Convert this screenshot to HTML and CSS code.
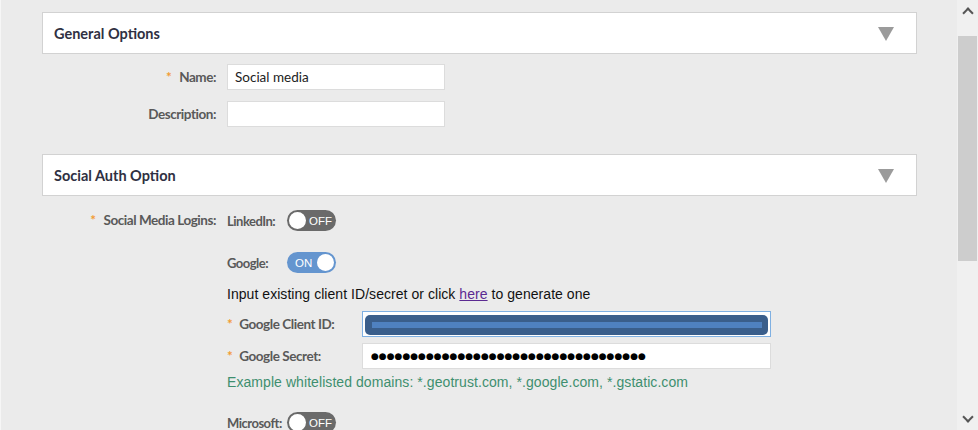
FILE: index.html
```html
<!DOCTYPE html>
<html lang="en">
<head>
    <meta charset="utf-8">
    <title>Social media</title>
    <link rel="stylesheet" href="styles.css">
</head>

<body>
    <div class="page">
        <main class="content">
            <section class="panel">
                <h2>General Options</h2>
                <span class="caret"></span>
            </section>

            <div class="row row_name">
                <label class="lbl req" for="name">Name:</label>
                <input class="field" type="text" id="name" value="Social media">
            </div>
            <div class="row row_desc">
                <label class="lbl" for="desc">Description:</label>
                <input class="field" type="text" id="desc">
            </div>

            <section class="panel panel_auth">
                <h2>Social Auth Option</h2>
                <span class="caret"></span>
            </section>

            <div class="row row_logins">
                <div class="lbl req">Social Media Logins:</div>
                <div class="providers">
                    <div class="provider">
                        <span class="pname">LinkedIn:</span>
                        <span class="toggle off"><span class="knob"></span><span class="state">OFF</span></span>
                    </div>
                    <div class="provider google">
                        <span class="pname">Google:</span>
                        <span class="toggle on"><span class="state">ON</span><span class="knob"></span></span>
                    </div>

                    <p class="hint">Input existing client ID/secret or click <a href="#">here</a> to generate one</p>

                    <div class="sub_row client_row">
                        <label class="sub_lbl req">Google Client ID:</label>
                        <div class="field wide focused"><span class="mask"><span class="mask_line"></span></span></div>
                    </div>
                    <div class="sub_row secret_row">
                        <label class="sub_lbl req" for="secret">Google Secret:</label>
                        <input class="field wide dots" type="text" id="secret" value="●●●●●●●●●●●●●●●●●●●●●●●●●●●●●●●●●●●">
                    </div>

                    <p class="domains">Example whitelisted domains: *.geotrust.com, *.google.com, *.gstatic.com</p>

                    <div class="provider microsoft">
                        <span class="pname">Microsoft:</span>
                        <span class="toggle off"><span class="knob"></span><span class="state">OFF</span></span>
                    </div>
                </div>
            </div>
        </main>

        <div class="scrollbar">
            <span class="arrow up"></span>
            <span class="thumb"></span>
            <span class="arrow down"></span>
        </div>
    </div>
</body>

</html>
```

FILE: styles.css
```css
html, body {
    margin: 0;
    height: 100%;
    overflow: hidden;
}

body {
    font-family: Lato, "Noto Sans", sans-serif;
    background-color: #ebebeb;
}

.page {
    display: flex;
    height: 430px;
    border-left: 1px solid #f6f6f6;
}

.content {
    flex: 1;
    padding-top: 12px;
}

/* collapsible section header */
.panel {
    display: flex;
    align-items: center;
    justify-content: space-between;
    box-sizing: border-box;
    width: 875px;
    height: 42px;
    margin-left: 41px;
    padding: 1px 22px 0 11px;
    background-color: #fff;
    border: 1px solid #d2d2d2;
}

.panel h2 {
    margin: 0;
    font-size: 14.5px;
    font-weight: bold;
    color: #2f3042;
}

.caret {
    width: 0;
    height: 0;
    border-left: 8px solid transparent;
    border-right: 8px solid transparent;
    border-top: 14px solid #9b9b9b;
}

.panel_auth {
    margin-top: 27px;
}

/* form rows */
.row {
    display: flex;
    align-items: center;
    padding-left: 41px;
}

.row_name {
    margin-top: 10px;
}

.row_desc {
    margin-top: 11px;
}

.row_logins {
    align-items: flex-start;
    margin-top: 14px;
}

.lbl, .pname, .sub_lbl {
    font-size: 13.5px;
    font-weight: bold;
    letter-spacing: -0.45px;
    color: #595959;
    flex-shrink: 0;
}

.lbl {
    width: 174px;
    margin-right: 11px;
    text-align: right;
    line-height: 21px;
}

.req::before {
    content: "*";
    color: #f29b32;
    margin-right: 8px;
}

.field {
    box-sizing: border-box;
    flex-shrink: 0;
    width: 218px;
    height: 26px;
    margin: 0;
    padding: 0 7px;
    border: 1px solid #dcdcdc;
    background-color: #fff;
    font-family: Lato, sans-serif;
    font-size: 13.5px;
    color: #222;
    outline: none;
}

/* social providers */
.provider {
    display: flex;
    align-items: center;
    height: 21px;
}

.google {
    margin-top: 21px;
}

.microsoft {
    margin-top: 20px;
}

.pname {
    width: 60px;
    font-size: 13px;
    letter-spacing: -0.5px;
}

.toggle {
    display: flex;
    align-items: center;
    justify-content: space-between;
    box-sizing: border-box;
    flex-shrink: 0;
    width: 49px;
    height: 21px;
    padding: 0 2px;
    border-radius: 11px;
    font-family: "Liberation Sans", Arial, sans-serif;
    font-size: 11.5px;
    color: #fff;
}

.toggle.off {
    background-color: #6a6a6a;
    padding-right: 4px;
}

.toggle.on {
    background-color: #6495cf;
    padding-left: 8px;
}

.knob {
    width: 17px;
    height: 17px;
    border-radius: 50%;
    background-color: #fff;
}

.hint {
    margin: 11px 0 0;
    font-family: "Liberation Sans", Arial, sans-serif;
    font-size: 14px;
    line-height: 20px;
    letter-spacing: 0.05px;
    color: #111;
}

.hint a {
    color: #5b2a92;
}

.sub_row {
    display: flex;
    align-items: center;
}

.client_row {
    margin-top: 7px;
}

.secret_row {
    margin-top: 6px;
}

.sub_lbl {
    width: 135px;
}

.sub_lbl.req::before {
    margin-right: 7px;
}

.field.wide {
    width: 409px;
}

.focused {
    display: flex;
    align-items: flex-end;
    padding: 0 2px 1px;
    border-color: #7fb0e2;
}

/* redacted client id */
.mask {
    display: flex;
    align-items: center;
    width: 403px;
    height: 20px;
    border-radius: 5px;
    background-color: #3a5e8b;
}

.mask_line {
    width: 390px;
    height: 6px;
    margin-left: 7px;
    background-color: #4f81c0;
}

.dots {
    padding-left: 8px;
    font-family: "DejaVu Sans", sans-serif;
    font-size: 9px;
    letter-spacing: 0;
    color: #000;
}

.domains {
    margin: 3px 0 0;
    font-family: "Liberation Sans", Arial, sans-serif;
    font-size: 14px;
    line-height: 20px;
    letter-spacing: 0.07px;
    color: #3e8f6f;
}

/* window scrollbar */
.scrollbar {
    display: flex;
    flex-direction: column;
    align-items: center;
    width: 21px;
    background-color: #f0f0f0;
}

.thumb {
    width: 19px;
    height: 225px;
    margin-top: 19px;
    background-color: #cdcdcd;
}

.arrow {
    width: 6px;
    height: 6px;
    border-left: 2px solid #555;
    border-top: 2px solid #555;
}

.arrow.up {
    margin-top: 9px;
    transform: rotate(45deg);
}

.arrow.down {
    margin-top: auto;
    margin-bottom: 9px;
    transform: rotate(225deg);
}
```
